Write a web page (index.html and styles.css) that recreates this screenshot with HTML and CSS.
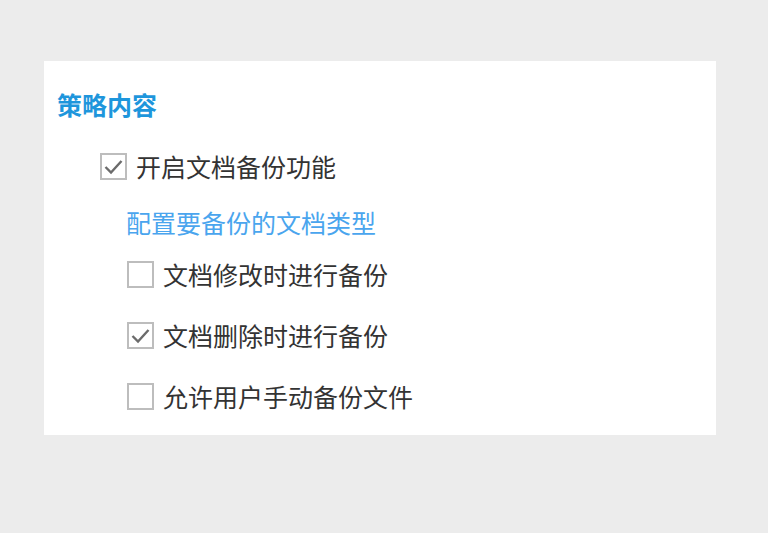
FILE: index.html
```html
<!DOCTYPE html>
<html lang="zh-CN">

<head>
    <meta charset="UTF-8">
    <meta name="viewport" content="width=device-width, initial-scale=1.0" />
    <title>策略内容</title>
    <link rel="stylesheet" href="styles.css">
</head>

<body>
    <!-- Policy card -->
    <div class="card">
        <h2 class="card-title">策略内容</h2>

        <label class="option option-main">
            <span class="box">
                <svg viewBox="0 0 23 23" width="23" height="23"><polyline points="3.5,12 9,17.5 19.5,6" /></svg>
            </span>
            <span>开启文档备份功能</span>
        </label>

        <a class="config-link" href="#">配置要备份的文档类型</a>

        <!-- Backup options -->
        <div class="sub-options">
            <label class="option">
                <span class="box"></span>
                <span>文档修改时进行备份</span>
            </label>
            <label class="option">
                <span class="box">
                    <svg viewBox="0 0 23 23" width="23" height="23"><polyline points="3.5,12 9,17.5 19.5,6" /></svg>
                </span>
                <span>文档删除时进行备份</span>
            </label>
            <label class="option">
                <span class="box"></span>
                <span>允许用户手动备份文件</span>
            </label>
        </div>
    </div>
</body>

</html>
```

FILE: styles.css
```css
/* Reset some basic styles */
* {
    margin: 0;
    padding: 0;
    box-sizing: border-box;
}

body {
    font-family: "Noto Sans CJK SC", "Noto Sans", sans-serif;
    background-color: #ececec;
    padding: 61px 0 0 44px;
    color: #333;
}

/* Card */
.card {
    width: 672px;
    height: 374px;
    background-color: #fff;
    padding: 28px 13px 0;
}

.card-title {
    font-size: 25px;
    line-height: 30px;
    font-weight: bold;
    color: #1e96dc;
}

/* Checkbox rows */
.option {
    display: flex;
    align-items: center;
    font-size: 25px;
    line-height: 30px;
    cursor: pointer;
}

.option-main {
    margin-top: 32px;
    margin-left: 43px;
}

.box {
    width: 27px;
    height: 27px;
    border: 2px solid #bdbdbd;
    margin-right: 9px;
    display: flex;
    align-items: center;
    justify-content: center;
    flex-shrink: 0;
}

.box polyline {
    fill: none;
    stroke: #6b6b6b;
    stroke-width: 2.4;
}

.config-link {
    display: block;
    margin: 26px 0 0 69px;
    font-size: 25px;
    line-height: 30px;
    color: #4aa5ee;
    text-decoration: none;
}

.sub-options {
    display: flex;
    flex-direction: column;
    gap: 31px;
    margin: 22px 0 0 70px;
}
```
